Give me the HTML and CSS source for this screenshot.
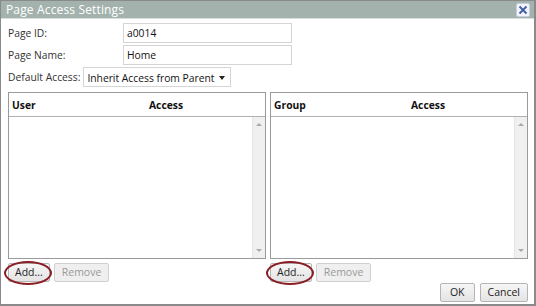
FILE: index.html
```html
<!DOCTYPE html>
<html lang="en">

<head>
    <meta charset="UTF-8">
    <title>Page Access Settings</title>
    <link rel="stylesheet" href="styles.css">
</head>

<body>
    <div class="dialog">
        <div class="title-bar">
            <span class="title">Page Access Settings</span>
            <span class="close-btn">
                <svg width="10" height="10" viewBox="0 0 10 10">
                    <path d="M1.5 1.5 L8.5 8.5 M8.5 1.5 L1.5 8.5" stroke="#3f5aa8" stroke-width="1.8" />
                </svg>
            </span>
        </div>
        <div class="dialog-body">
            <div class="field-row">
                <label class="field-label wide">Page ID:</label>
                <div class="text-input">a0014</div>
            </div>
            <div class="field-row">
                <label class="field-label wide">Page Name:</label>
                <div class="text-input">Home</div>
            </div>
            <div class="field-row">
                <label class="field-label">Default Access:</label>
                <div class="select-box">Inherit Access from Parent <span class="caret"></span></div>
            </div>

            <div class="panels">
                <div class="panel">
                    <div class="grid-box">
                        <div class="grid-head">
                            <span class="col-name">User</span>
                            <span class="col-access">Access</span>
                        </div>
                        <div class="grid-rows">
                            <div class="grid-empty"></div>
                            <div class="scrollbar">
                                <span class="arrow up"></span>
                                <span class="arrow down"></span>
                            </div>
                        </div>
                    </div>
                    <div class="panel-buttons">
                        <button class="btn circled">Add...</button>
                        <button class="btn" disabled>Remove</button>
                    </div>
                </div>
                <div class="panel">
                    <div class="grid-box">
                        <div class="grid-head">
                            <span class="col-name">Group</span>
                            <span class="col-access">Access</span>
                        </div>
                        <div class="grid-rows">
                            <div class="grid-empty"></div>
                            <div class="scrollbar">
                                <span class="arrow up"></span>
                                <span class="arrow down"></span>
                            </div>
                        </div>
                    </div>
                    <div class="panel-buttons">
                        <button class="btn circled">Add...</button>
                        <button class="btn" disabled>Remove</button>
                    </div>
                </div>
            </div>

            <div class="dialog-buttons">
                <button class="btn ok">OK</button>
                <button class="btn">Cancel</button>
            </div>
        </div>
    </div>
</body>

</html>
```

FILE: styles.css
```css
body {
    margin: 0;
    background: #fff;
    font-family: 'Open Sans', 'Noto Sans', sans-serif;
    font-size: 10.3px;
    color: #222;
}

.dialog {
    width: 536px;
    height: 306px;
    box-sizing: border-box;
    border: 1px solid #8a8a8a;
    border-right-width: 2px;
    border-bottom-width: 2px;
    display: flex;
    flex-direction: column;
    background: #fff;
}

.title-bar {
    height: 18px;
    background: #a3b2ad;
    border-bottom: 1px solid #d8dedc;
    display: flex;
    align-items: center;
    justify-content: space-between;
    padding: 0 4px 0 5px;
}

.title {
    color: #fff;
    font-family: 'Open Sans', 'Noto Sans', sans-serif;
    font-size: 12px;
    letter-spacing: 0.15px;
}

.close-btn {
    width: 14px;
    height: 14px;
    box-sizing: border-box;
    background: #f1f4fb;
    border: 1px solid #c6d0e0;
    border-radius: 2px;
    display: flex;
    align-items: center;
    justify-content: center;
}

.dialog-body {
    flex: 1;
    padding: 4px 6px 4px 7px;
    display: flex;
    flex-direction: column;
}

.field-row {
    display: flex;
    align-items: center;
    height: 20px;
    margin-bottom: 2px;
}

.field-label {
    color: #333;
    margin-right: 3px;
}

.field-label.wide {
    width: 112px;
    margin-right: 3px;
}

.text-input {
    width: 169px;
    height: 20px;
    box-sizing: border-box;
    border: 1px solid #d5d5d5;
    padding: 2px 3px;
    line-height: 14px;
    color: #111;
}

.select-box {
    height: 20px;
    box-sizing: border-box;
    border: 1px solid #d5d5d5;
    padding: 2px 5px 0 3px;
    line-height: 14px;
    color: #111;
    display: flex;
    align-items: center;
    gap: 4px;
}

.caret {
    width: 0;
    height: 0;
    border-left: 3px solid transparent;
    border-right: 3px solid transparent;
    border-top: 4px solid #222;
    margin-left: 1px;
}

.panels {
    display: flex;
    gap: 4px;
    margin-top: 3px;
}

.panel {
    flex: 1;
    display: flex;
    flex-direction: column;
}

.grid-box {
    height: 167px;
    box-sizing: border-box;
    border: 1px solid #9a9a9a;
    display: flex;
    flex-direction: column;
}

.grid-head {
    height: 23px;
    border-bottom: 1px solid #b0b0b0;
    display: flex;
    align-items: center;
    font-weight: bold;
    color: #111;
}

.col-name {
    width: 137px;
    padding-left: 3px;
}

.grid-rows {
    flex: 1;
    display: flex;
}

.grid-empty {
    flex: 1;
}

.scrollbar {
    width: 12px;
    background: #f0f0f0;
    border-left: 1px solid #e4e4e4;
    display: flex;
    flex-direction: column;
    justify-content: space-between;
    align-items: center;
    padding: 6px 0;
}

.arrow {
    width: 0;
    height: 0;
    border-left: 3px solid transparent;
    border-right: 3px solid transparent;
}

.arrow.up {
    border-bottom: 3px solid #aaa;
}

.arrow.down {
    border-top: 3px solid #aaa;
}

.panel-buttons {
    display: flex;
    gap: 4px;
    margin-top: 4px;
}

.btn {
    font-family: 'Open Sans', 'Noto Sans', sans-serif;
    font-size: 10.5px;
    height: 19px;
    padding: 0 6px;
    background: linear-gradient(#f6f6f6, #e4e4e4);
    border: 1px solid #b5b5b5;
    border-radius: 2px;
    color: #222;
    line-height: 15px;
}

.btn:disabled {
    color: #999;
    background: #efefef;
    border-color: #d0d0d0;
    padding: 0 7px;
}

.btn.circled {
    position: relative;
}

.btn.circled::after {
    content: '';
    position: absolute;
    left: -5px;
    right: -3px;
    top: -3px;
    bottom: -4px;
    border: 2px solid #8b1d24;
    border-radius: 50%;
}

.dialog-buttons {
    display: flex;
    justify-content: flex-end;
    gap: 5px;
    margin-top: 1px;
}

.dialog-buttons .btn {
    padding: 0 7px;
}

.dialog-buttons .btn.ok {
    padding: 0 9px;
}
```
